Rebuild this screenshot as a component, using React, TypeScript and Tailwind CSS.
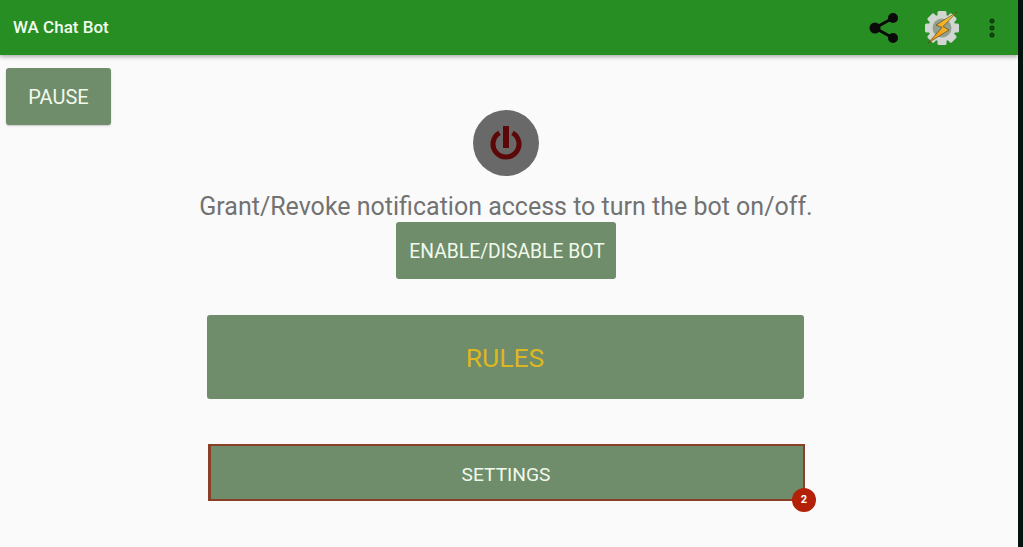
import { MoreVertical } from "lucide-react";

function ShareIcon() {
  return (
    <svg width="30" height="32" viewBox="0 0 30 32" fill="none">
      <path d="M24 6 L6 16 L24 26" stroke="#0a0a0a" strokeWidth="3" />
      <circle cx="24" cy="6" r="5" fill="#0a0a0a" />
      <circle cx="6" cy="16" r="5.5" fill="#0a0a0a" />
      <circle cx="24" cy="26" r="5" fill="#0a0a0a" />
    </svg>
  );
}

function TaskerIcon() {
  const teeth = [0, 45, 90, 135, 180, 225, 270, 315];
  return (
    <svg width="36" height="36" viewBox="0 0 36 36">
      <defs>
        <linearGradient id="bolt" x1="1" y1="0" x2="0" y2="1">
          <stop offset="0" stopColor="#f8d23a" />
          <stop offset="1" stopColor="#ee8a14" />
        </linearGradient>
      </defs>
      {teeth.map((a) => (
        <rect key={a} x="13.5" y="1" width="9" height="8" rx="1.5" fill="#d2d6d2" transform={`rotate(${a} 18 18)`} />
      ))}
      <circle cx="18" cy="18" r="13.5" fill="#d2d6d2" />
      <circle cx="18" cy="18" r="9.5" fill="#93a08e" />
      <path d="M33 2 L12 15 L18 17.5 L4 33 L25 20 L19 16.5 Z" fill="url(#bolt)" stroke="#4a3a10" strokeWidth="0.6" />
    </svg>
  );
}

function PowerIcon() {
  return (
    <svg width="40" height="40" viewBox="0 0 40 40" fill="none">
      <path d="M13.5 9.8 A13 13 0 1 0 26.5 9.8" stroke="#5c0808" strokeWidth="5" />
      <rect x="17" y="3" width="6" height="22" fill="#5c0808" />
    </svg>
  );
}

export default function App() {
  return (
    <div className="w-[1023px] h-[547px] overflow-hidden flex bg-[#03140f] font-['Roboto',sans-serif]">
      <div className="w-[1018px] h-full bg-[#fafafa]">
        <header className="relative h-[55px] bg-[#278e23] flex items-center pl-[13px] shadow-[0_2px_4px_rgba(0,0,0,0.3)]">
          <span className="text-[#f1fbef] text-[17px] font-medium">WA Chat Bot</span>
          <div className="ml-auto flex items-center">
            <ShareIcon />
            <div className="ml-[25px]"><TaskerIcon /></div>
            <MoreVertical className="ml-[20px] mr-[14px] text-[#0b3d0b]" size={24} strokeWidth={3} />
          </div>
        </header>

        <main className="flex flex-col items-center pr-[7px]">
          <button className="self-start ml-[6px] mt-[13px] w-[105px] h-[57px] rounded-[3px] bg-[#6f8d6b] text-[#f1f9ec] text-[20px] shadow-[0_1px_2px_rgba(0,0,0,0.2)]">
            PAUSE
          </button>

          <div className="-mt-[15px] ml-[1px] w-[66px] h-[66px] rounded-full bg-[#696969] flex items-center justify-center">
            <PowerIcon />
          </div>

          <p className="mt-[15px] ml-[1px] text-[#727272] text-[25px] leading-[31px] whitespace-nowrap">
            Grant/Revoke notification access to turn the bot on/off.
          </p>

          <button className="ml-[1px] w-[220px] h-[57px] pt-[3px] pl-[2px] rounded-[3px] bg-[#6f8d6b] text-[#f1f9ec] text-[19.3px]">
            ENABLE/DISABLE BOT
          </button>

          <button className="mt-[36px] w-[597px] h-[84px] pt-[1px] pr-[1px] rounded-[3px] bg-[#6f8d6b] text-[#dcb722] text-[26.5px]">
            RULES
          </button>

          <div className="relative mt-[45px] ml-[2px] w-[597px] h-[57px]">
            <button className="w-full h-full pt-[6px] pr-[2px] border-2 border-l-[3px] border-[#8a3f28] bg-[#6f8d6b] text-[#f1f9ec] text-[19.2px]">
              SETTINGS
            </button>
            <span className="absolute right-[-11px] bottom-[-11px] w-[24px] h-[24px] rounded-full bg-[#b32208] text-white text-[11px] font-bold flex items-center justify-center">
              2
            </span>
          </div>
        </main>
      </div>
    </div>
  );
}
